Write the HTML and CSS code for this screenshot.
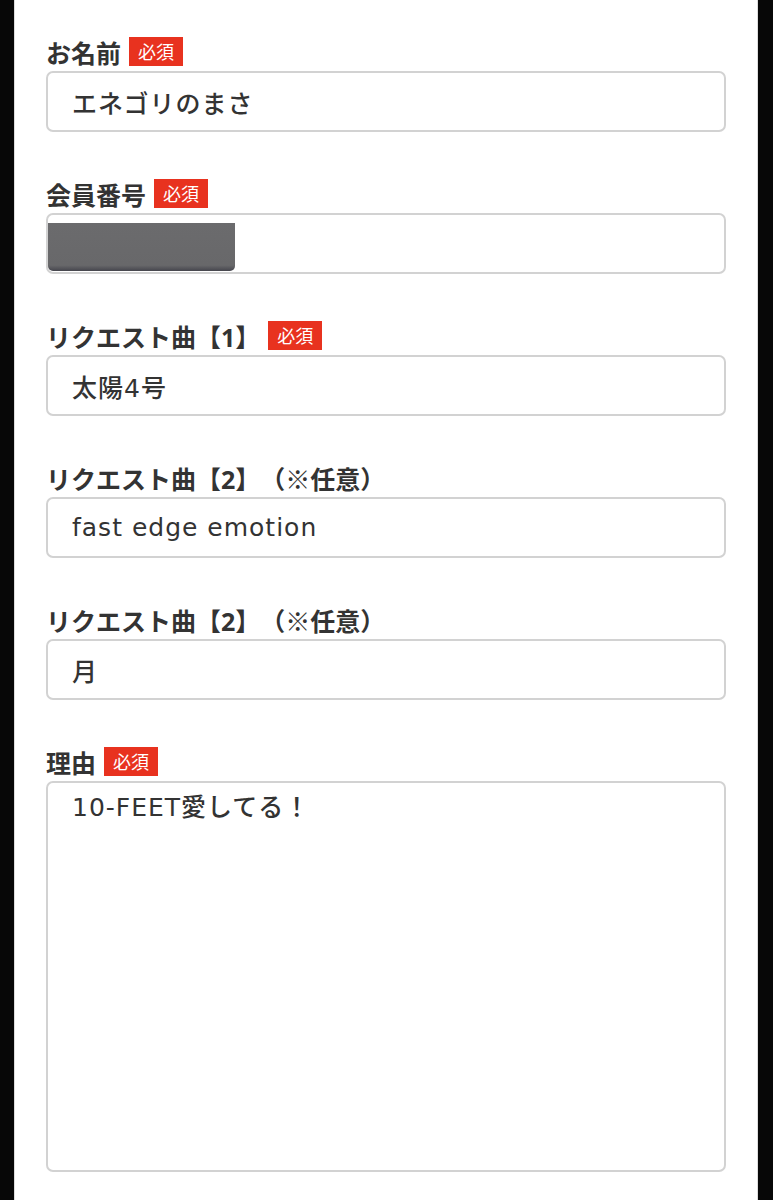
FILE: index.html
```html
<!DOCTYPE html>
<html lang="ja">
<head>
    <meta charset="UTF-8">
    <meta name="viewport" content="width=device-width, initial-scale=1.0">
    <title>リクエストフォーム</title>
    <link rel="stylesheet" href="styles.css">
</head>
<body>
    <div class="panel">
        <form class="form">
            <div class="field">
                <div class="label">お名前<span class="req">必須</span></div>
                <input class="box" type="text" value="エネゴリのまさ">
            </div>
            <div class="field">
                <div class="label">会員番号<span class="req">必須</span></div>
                <div class="masked">
                    <input class="box" type="text" value="">
                    <span class="redact"></span>
                </div>
            </div>
            <div class="field">
                <div class="label">リクエスト曲【1】<span class="req">必須</span></div>
                <input class="box" type="text" value="太陽4号">
            </div>
            <div class="field">
                <div class="label">リクエスト曲【2】（※任意）</div>
                <input class="box" type="text" value="fast edge emotion">
            </div>
            <div class="field">
                <div class="label">リクエスト曲【2】（※任意）</div>
                <input class="box" type="text" value="月">
            </div>
            <div class="field">
                <div class="label">理由<span class="req">必須</span></div>
                <textarea class="box area">10-FEET愛してる！</textarea>
            </div>
        </form>
    </div>
</body>
</html>
```

FILE: styles.css
```css
body { margin: 0; background-color: #070707; font-family: "Open Sans", "Noto Sans CJK JP", sans-serif; color: #333; text-spacing-trim: space-all; }
.panel { background: #fff; margin: 0 15px 0 14px; min-height: 1200px; padding: 37px 31px 0 31px; box-sizing: border-box; border-left: 1px solid #ddd; border-right: 1px solid #ddd; }
.field { margin-bottom: 47px; }
.label { display: flex; align-items: center; height: 29px; margin-bottom: 5px; font-size: 25px; font-weight: bold; color: #333; }
.req { background-color: #e8321f; color: #fff; font-family: "Noto Sans CJK JP", sans-serif; font-size: 18px; font-weight: normal; line-height: 29px; padding: 0 9px; margin-left: 8px; }
.box { display: block; width: 100%; height: 61px; box-sizing: border-box; border: 2px solid #d2d2d2; border-radius: 7px; padding: 0 24px; font-family: "DejaVu Sans", "Noto Sans CJK JP", sans-serif; font-size: 25px; font-weight: 500; letter-spacing: 1px; color: #333; background: #fff; outline: none; text-spacing-trim: space-all; }
.area { height: 391px; padding: 6px 24px; resize: none; line-height: 1.5; }
.masked { position: relative; }
.redact { position: absolute; left: 2px; top: 10px; width: 187px; height: 48px; background: linear-gradient(to bottom, #6b6b6d 0%, #68686a 88%, #45454d 100%); border-radius: 0 0 5px 5px; }
```
